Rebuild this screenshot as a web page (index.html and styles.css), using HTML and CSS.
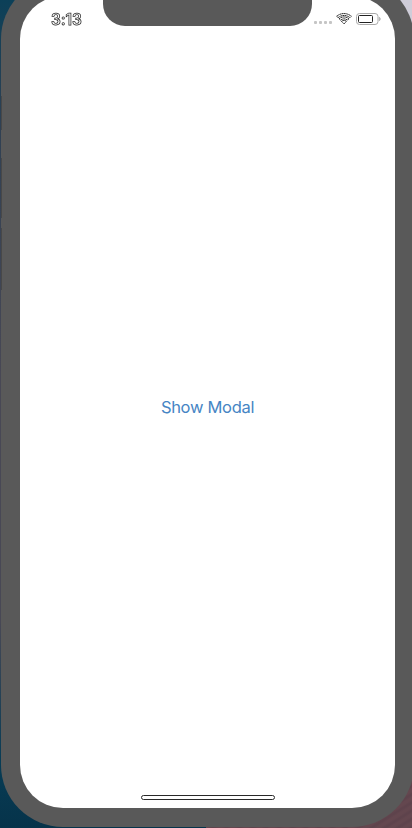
FILE: index.html
```html
<!DOCTYPE html>
<html lang="en">
<head>
<meta charset="utf-8">
<title>Show Modal</title>
<link rel="stylesheet" href="styles.css">
</head>
<body>
<div class="phone">
  <main class="screen">
    <header class="status">
      <span class="time">3:13</span>
      <div class="notch"></div>
      <div class="indicators">
        <div class="signal"><i></i><i></i><i></i><i></i></div>
        <svg class="wifi" width="16" height="12" viewBox="0 0 16 12" fill="#fff" stroke="#111" stroke-width=".9" stroke-dasharray="1.5 .35">
          <path d="M.7 3.3C4.8-.4 11.2-.4 15.3 3.3L13.9 4.7C10.6 1.7 5.4 1.7 2.1 4.7Z"/>
          <path d="M3.1 5.8C5.9 3.3 10.1 3.3 12.9 5.8L11.5 7.2C9.5 5.4 6.5 5.4 4.5 7.2Z"/>
          <path d="M5.5 8.4C6.9 7.1 9.1 7.1 10.5 8.4L8 10.9Z"/>
        </svg>
        <svg class="battery" width="26" height="12" viewBox="0 0 26 12" fill="none">
          <rect x=".5" y=".5" width="21.5" height="11" rx="3" stroke="#aaa"/>
          <rect x="2.5" y="2.5" width="14" height="7" rx="1" stroke="#222"/>
          <path d="M23.3 4Q25.6 6 23.3 8Z" fill="#aaa" stroke="#aaa" stroke-width=".5"/>
        </svg>
      </div>
    </header>
    <button class="show">Show Modal</button>
    <div class="home"></div>
  </main>
</div>
</body>
</html>
```
FILE: styles.css
```css
* { box-sizing: border-box; }
html, body { height: 100%; }
body {
  margin: 0;
  overflow: hidden;
  display: flow-root;
  font-family: Inter, "Liberation Sans", sans-serif;
  background:
    linear-gradient(#cfcdd9, #cfcdd9) right top / 50% 50% no-repeat,
    repeating-linear-gradient(148deg, #64474f 0 2px, #5e434c 4px 5px, #64474f 7px) right bottom / 50% 50% no-repeat,
    linear-gradient(#0c4058, #2f4053 15%, #484855 45%, #484855 75%, #073c55 92%, #06334a);
}
.phone {
  width: 413px;
  height: 850px;
  margin: -23px 0 0 1px;
  padding: 19px 18px 19px 19px;
  border-radius: 62px;
  background:
    linear-gradient(#484848, #484848) 0 119px / 1px 34px no-repeat,
    linear-gradient(#484848, #484848) 0 181px / 1px 60px no-repeat,
    linear-gradient(#484848, #484848) 0 251px / 1px 62px no-repeat,
    #595959;
}
.screen {
  width: 375px;
  height: 812px;
  padding-top: 4px;
  border-radius: 43px;
  background: #fff;
  overflow: hidden;
  display: flex;
  flex-direction: column;
  align-items: center;
}
.status {
  width: 100%;
  height: 26px;
  display: grid;
  grid-template-columns: 83px 209px 83px;
}
.time {
  padding: 11px 0 0 31px;
  font-size: 15.5px;
  line-height: 18px;
  font-weight: 600;
  letter-spacing: -.1px;
  color: #fff;
  -webkit-text-stroke: .75px #292929;
  will-change: transform;
}
.notch {
  height: 26px;
  border-radius: 0 0 22px 22px;
  background: #595959;
}
.indicators {
  display: flex;
  align-items: flex-start;
  padding: 13px 0 0 2px;
}
.signal { display: flex; gap: 2px; padding-top: 8px; }
.signal i { width: 3px; height: 3px; border-radius: 1px; background: #c5c5c5; }
.wifi { margin-left: 4px; flex: none; }
.battery { margin-left: 4px; flex: none; }
.show {
  margin: 370px 0 0;
  padding: 0;
  border: 0;
  background: none;
  font: 400 16.5px/22px Inter, sans-serif;
  letter-spacing: -.3px;
  color: #4685c4;
  white-space: nowrap;
}
.home {
  width: 134px;
  height: 5px;
  margin: auto 0 8px;
  border: 1px solid #292929;
  border-radius: 3px;
}
```
